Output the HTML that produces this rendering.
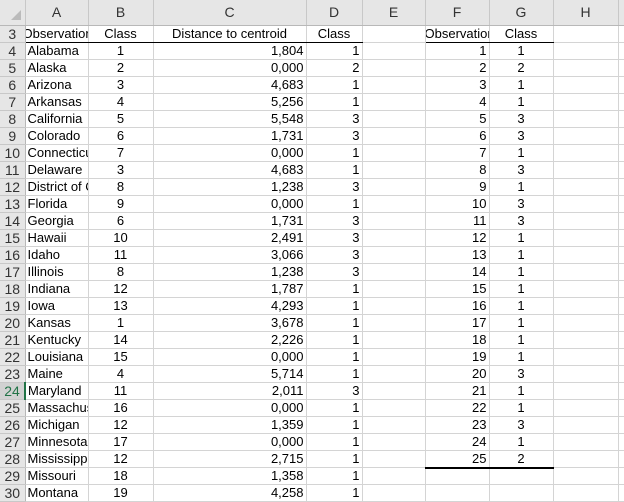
<!DOCTYPE html>
<html><head><meta charset="utf-8">
<style>
html,body{margin:0;padding:0;background:#fff;width:624px;height:490px;overflow:hidden}
table{border-collapse:collapse;table-layout:fixed;width:658px;font-family:"Liberation Sans",Arial,sans-serif;font-size:13px;color:#000;position:absolute;left:0;top:0}
td{height:16px;border-right:1px solid #d4d4d4;border-bottom:1px solid #d4d4d4;padding:0 2px;white-space:nowrap;overflow:hidden;line-height:16px;box-sizing:border-box}
tr.h td{height:25px;background:#e6e6e6;color:#333;text-align:center;font-size:14px;border-right:1px solid #c8c8c8;border-bottom:1px solid #b8b8b8}
td.r{background:#e6e6e6;color:#333;text-align:center;border-right:1px solid #b8b8b8;border-bottom:1px solid #c8c8c8;padding:0;font-size:14px}
td.sel{background:#d2d2d2;color:#217346;border-right:2px solid #217346}
.c{text-align:center}.n{text-align:right}
.bb{border-bottom:1px solid #000}
.tb{border-bottom:2px solid #000}
.ov{text-overflow:clip;padding:0}
</style></head><body>
<table>
<colgroup><col style="width:25px"><col style="width:63px"><col style="width:65px"><col style="width:153px"><col style="width:56px"><col style="width:63px"><col style="width:64px"><col style="width:64px"><col style="width:65px"><col style="width:40px"></colgroup>
<tr class="h"><td style="background:#e6e6e6"><svg width="12" height="12" style="position:relative;left:4px;top:4px"><polygon points="11,1 11,11 1,11" fill="#bbb"/></svg></td><td>A</td><td>B</td><td>C</td><td>D</td><td>E</td><td>F</td><td>G</td><td>H</td><td></td></tr>
<tr><td class="r">3</td><td class="bb ov"><div style="margin-left:-3px">Observation</div></td><td class="c bb">Class</td><td class="c bb">Distance to centroid</td><td class="c bb">Class</td><td></td><td class="bb ov"><div style="margin-left:-1px">Observation</div></td><td class="c bb">Class</td><td></td><td></td></tr>
<tr><td class="r">4</td><td>Alabama</td><td class="c">1</td><td class="n">1,804</td><td class="n">1</td><td></td><td class="n">1</td><td class="c">1</td><td></td><td></td></tr>
<tr><td class="r">5</td><td>Alaska</td><td class="c">2</td><td class="n">0,000</td><td class="n">2</td><td></td><td class="n">2</td><td class="c">2</td><td></td><td></td></tr>
<tr><td class="r">6</td><td>Arizona</td><td class="c">3</td><td class="n">4,683</td><td class="n">1</td><td></td><td class="n">3</td><td class="c">1</td><td></td><td></td></tr>
<tr><td class="r">7</td><td>Arkansas</td><td class="c">4</td><td class="n">5,256</td><td class="n">1</td><td></td><td class="n">4</td><td class="c">1</td><td></td><td></td></tr>
<tr><td class="r">8</td><td>California</td><td class="c">5</td><td class="n">5,548</td><td class="n">3</td><td></td><td class="n">5</td><td class="c">3</td><td></td><td></td></tr>
<tr><td class="r">9</td><td>Colorado</td><td class="c">6</td><td class="n">1,731</td><td class="n">3</td><td></td><td class="n">6</td><td class="c">3</td><td></td><td></td></tr>
<tr><td class="r">10</td><td>Connecticut</td><td class="c">7</td><td class="n">0,000</td><td class="n">1</td><td></td><td class="n">7</td><td class="c">1</td><td></td><td></td></tr>
<tr><td class="r">11</td><td>Delaware</td><td class="c">3</td><td class="n">4,683</td><td class="n">1</td><td></td><td class="n">8</td><td class="c">3</td><td></td><td></td></tr>
<tr><td class="r">12</td><td>District of Columbia</td><td class="c">8</td><td class="n">1,238</td><td class="n">3</td><td></td><td class="n">9</td><td class="c">1</td><td></td><td></td></tr>
<tr><td class="r">13</td><td>Florida</td><td class="c">9</td><td class="n">0,000</td><td class="n">1</td><td></td><td class="n">10</td><td class="c">3</td><td></td><td></td></tr>
<tr><td class="r">14</td><td>Georgia</td><td class="c">6</td><td class="n">1,731</td><td class="n">3</td><td></td><td class="n">11</td><td class="c">3</td><td></td><td></td></tr>
<tr><td class="r">15</td><td>Hawaii</td><td class="c">10</td><td class="n">2,491</td><td class="n">3</td><td></td><td class="n">12</td><td class="c">1</td><td></td><td></td></tr>
<tr><td class="r">16</td><td>Idaho</td><td class="c">11</td><td class="n">3,066</td><td class="n">3</td><td></td><td class="n">13</td><td class="c">1</td><td></td><td></td></tr>
<tr><td class="r">17</td><td>Illinois</td><td class="c">8</td><td class="n">1,238</td><td class="n">3</td><td></td><td class="n">14</td><td class="c">1</td><td></td><td></td></tr>
<tr><td class="r">18</td><td>Indiana</td><td class="c">12</td><td class="n">1,787</td><td class="n">1</td><td></td><td class="n">15</td><td class="c">1</td><td></td><td></td></tr>
<tr><td class="r">19</td><td>Iowa</td><td class="c">13</td><td class="n">4,293</td><td class="n">1</td><td></td><td class="n">16</td><td class="c">1</td><td></td><td></td></tr>
<tr><td class="r">20</td><td>Kansas</td><td class="c">1</td><td class="n">3,678</td><td class="n">1</td><td></td><td class="n">17</td><td class="c">1</td><td></td><td></td></tr>
<tr><td class="r">21</td><td>Kentucky</td><td class="c">14</td><td class="n">2,226</td><td class="n">1</td><td></td><td class="n">18</td><td class="c">1</td><td></td><td></td></tr>
<tr><td class="r">22</td><td>Louisiana</td><td class="c">15</td><td class="n">0,000</td><td class="n">1</td><td></td><td class="n">19</td><td class="c">1</td><td></td><td></td></tr>
<tr><td class="r">23</td><td>Maine</td><td class="c">4</td><td class="n">5,714</td><td class="n">1</td><td></td><td class="n">20</td><td class="c">3</td><td></td><td></td></tr>
<tr><td class="r sel">24</td><td>Maryland</td><td class="c">11</td><td class="n">2,011</td><td class="n">3</td><td></td><td class="n">21</td><td class="c">1</td><td></td><td></td></tr>
<tr><td class="r">25</td><td>Massachusetts</td><td class="c">16</td><td class="n">0,000</td><td class="n">1</td><td></td><td class="n">22</td><td class="c">1</td><td></td><td></td></tr>
<tr><td class="r">26</td><td>Michigan</td><td class="c">12</td><td class="n">1,359</td><td class="n">1</td><td></td><td class="n">23</td><td class="c">3</td><td></td><td></td></tr>
<tr><td class="r">27</td><td>Minnesota</td><td class="c">17</td><td class="n">0,000</td><td class="n">1</td><td></td><td class="n">24</td><td class="c">1</td><td></td><td></td></tr>
<tr><td class="r">28</td><td>Mississippi</td><td class="c">12</td><td class="n">2,715</td><td class="n">1</td><td></td><td class="n tb">25</td><td class="c tb">2</td><td></td><td></td></tr>
<tr><td class="r">29</td><td>Missouri</td><td class="c">18</td><td class="n">1,358</td><td class="n">1</td><td></td><td></td><td></td><td></td><td></td></tr>
<tr><td class="r">30</td><td>Montana</td><td class="c">19</td><td class="n">4,258</td><td class="n">1</td><td></td><td></td><td></td><td></td><td></td></tr>
</table>
</body></html>
